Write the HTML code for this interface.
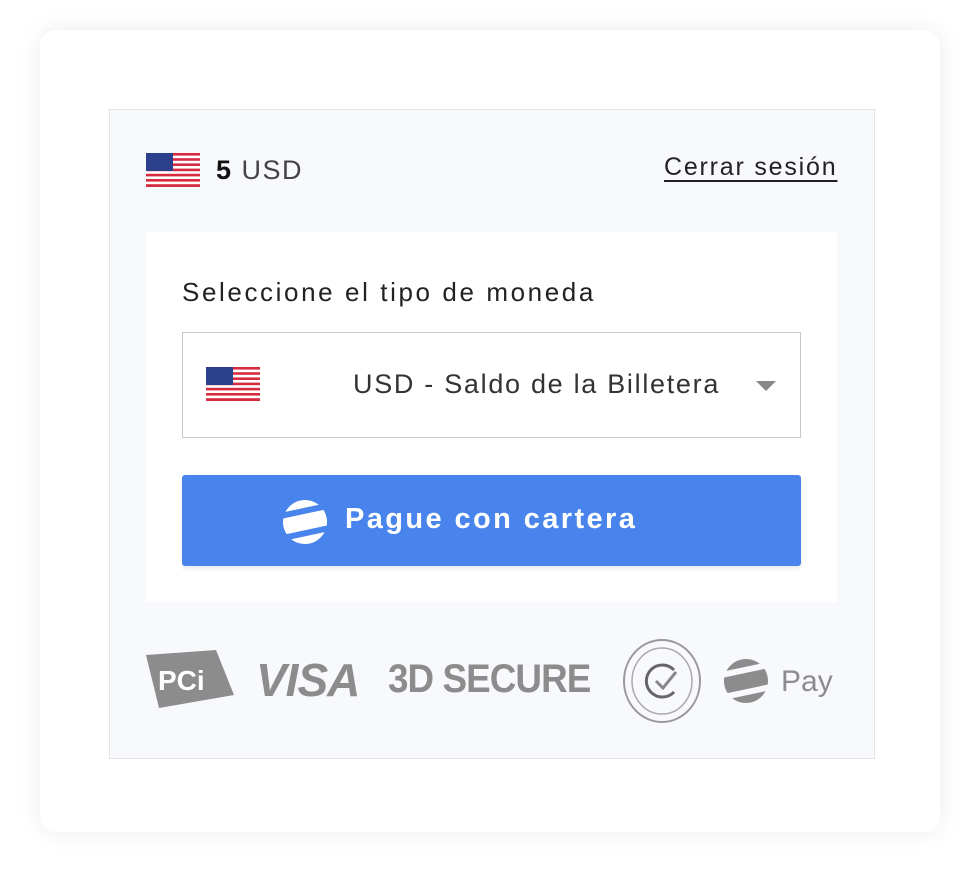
<!DOCTYPE html>
<html><head><meta charset="utf-8"><style>
*{margin:0;padding:0;box-sizing:border-box}
body{width:980px;height:880px;background:#fff;font-family:"Liberation Sans",sans-serif;position:relative;overflow:hidden}
.card{position:absolute;left:40px;top:30px;width:900px;height:802px;background:#fff;border-radius:16px;box-shadow:0 0 24px rgba(0,0,0,.08)}
.panel{position:absolute;left:109px;top:109px;width:766px;height:650px;background:#f8f9fd;border:1px solid #e3e5ea}
.flag{position:absolute}
.amt{position:absolute;left:216px;top:155px;font-size:27px;color:#111;letter-spacing:1.5px}
.amt b{font-weight:bold}.amt span{color:#444}
.logout{position:absolute;left:664px;top:153px;font-size:25px;color:#222;text-decoration:underline;text-underline-offset:5px;letter-spacing:1.8px;white-space:nowrap}
.box{position:absolute;left:146px;top:232px;width:691px;height:370px;background:#fff}
.lbl{position:absolute;left:182px;top:277px;font-size:26px;color:#222;letter-spacing:2.6px;white-space:nowrap}
.sel{position:absolute;left:182px;top:332px;width:619px;height:106px;border:1px solid #c8c8c8;background:#fff}
.sel .t{position:absolute;left:170px;top:36px;font-size:27px;color:#333;letter-spacing:1.7px;white-space:nowrap}
.caret{position:absolute;left:573px;top:48px;width:0;height:0;border-left:10px solid transparent;border-right:10px solid transparent;border-top:10px solid #888}
.btn{position:absolute;left:182px;top:475px;width:619px;height:91px;background:#4884ec;border-radius:3px;box-shadow:0 3px 4px rgba(0,0,0,.08)}
.btn .t{position:absolute;left:163px;top:28px;font-size:29px;font-weight:bold;color:#fff;letter-spacing:2.4px;white-space:nowrap}
.g{fill:#8c8c8c}
</style></head><body>
<div class="card"></div>
<div class="panel"></div>
<svg class="flag" style="left:146px;top:153px" width="54" height="34" viewBox="0 0 54 34">
<rect width="54" height="34" fill="#fff"/>
<g fill="#d72b3f"><rect y="0" width="54" height="2.6"/><rect y="5.2" width="54" height="2.6"/><rect y="10.4" width="54" height="2.6"/><rect y="15.6" width="54" height="2.6"/><rect y="20.8" width="54" height="2.6"/><rect y="26" width="54" height="2.6"/><rect y="31.2" width="54" height="2.8"/></g>
<rect width="27" height="18" fill="#2b3f8c"/></svg>
<div class="amt"><b>5</b> <span>USD</span></div>
<div class="logout">Cerrar sesión</div>
<div class="box"></div>
<div class="lbl">Seleccione el tipo de moneda</div>
<div class="sel">
<svg style="position:absolute;left:23px;top:34px" width="54" height="34" viewBox="0 0 54 34">
<rect width="54" height="34" fill="#fff"/>
<g fill="#d72b3f"><rect y="0" width="54" height="2.6"/><rect y="5.2" width="54" height="2.6"/><rect y="10.4" width="54" height="2.6"/><rect y="15.6" width="54" height="2.6"/><rect y="20.8" width="54" height="2.6"/><rect y="26" width="54" height="2.6"/><rect y="31.2" width="54" height="2.8"/></g>
<rect width="27" height="18" fill="#2b3f8c"/></svg>
<div class="t">USD - Saldo de la Billetera</div><div class="caret"></div></div>
<div class="btn">
<svg style="position:absolute;left:100px;top:24px" width="46" height="46" viewBox="0 0 46 46"><defs><clipPath id="c"><circle cx="23" cy="23" r="22"/></clipPath></defs>
<g clip-path="url(#c)" fill="#fff" transform="rotate(-12 23 23)"><rect x="0" y="0" width="46" height="9"/><rect x="0" y="15" width="46" height="16"/><rect x="0" y="37" width="46" height="9"/></g></svg>
<div class="t">Pague con cartera</div></div>
<svg style="position:absolute;left:146px;top:650px" width="90" height="60" viewBox="0 0 90 60"><polygon class="g" points="0,5 70,0 88,45 13,58"/>
<text x="12" y="40" font-family="Liberation Sans" font-weight="bold" font-size="28" fill="#fff">PCi</text></svg>
<div style="position:absolute;left:256px;top:653px;font-size:46px;font-weight:bold;font-style:italic;color:#8c8c8c;letter-spacing:-1px">VISA</div>
<div style="position:absolute;left:388px;top:657px;font-size:40px;font-weight:bold;color:#8c8c8c;transform:scaleX(.92);transform-origin:left;letter-spacing:-1px;white-space:nowrap">3D SECURE</div>
<svg style="position:absolute;left:622px;top:638px" width="82" height="86" viewBox="0 0 82 86"><ellipse cx="40" cy="43" rx="38" ry="41" fill="none" stroke="#999" stroke-width="2"/><ellipse cx="40" cy="43" rx="30" ry="33" fill="none" stroke="#aaa" stroke-width="1.5"/><path d="M52 32 A16 16 0 1 0 52 54" fill="none" stroke="#666" stroke-width="3"/><path d="M34 43 L41 50 L54 34" fill="none" stroke="#888" stroke-width="3"/></svg>
<svg style="position:absolute;left:723px;top:658px" width="46" height="46" viewBox="0 0 46 46"><defs><clipPath id="c2"><circle cx="23" cy="23" r="22"/></clipPath></defs>
<g clip-path="url(#c2)" fill="#8c8c8c" transform="rotate(-12 23 23)"><rect x="0" y="0" width="46" height="9"/><rect x="0" y="15" width="46" height="16"/><rect x="0" y="37" width="46" height="9"/></g></svg>
<div style="position:absolute;left:781px;top:665px;font-size:30px;color:#8c8c8c">Pay</div>
</body></html>
